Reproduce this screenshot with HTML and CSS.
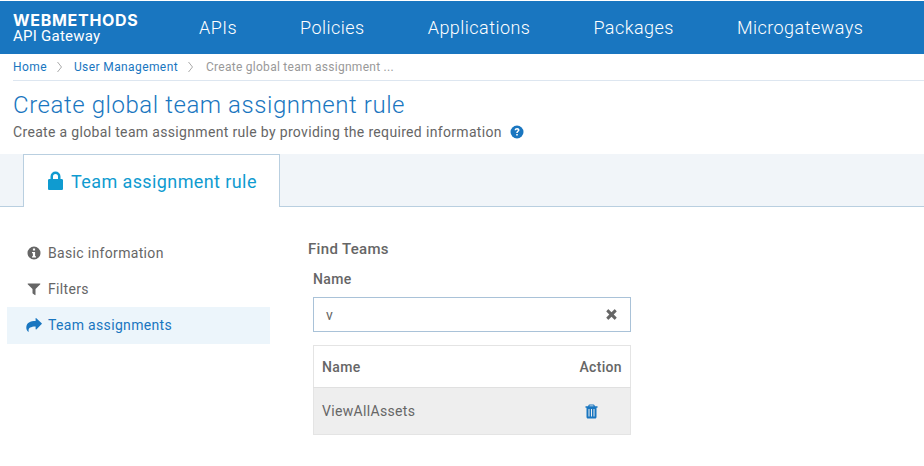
FILE: index.html
```html
<!DOCTYPE html>
<html lang="en">
  <head>
    <meta charset="UTF-8" />
    <meta name="viewport" content="width=device-width, initial-scale=1.0" />
    <title>Create global team assignment rule</title>
    <link rel="stylesheet" href="styles.css">
  </head>
  <body>
    <header class="topbar">
      <div class="brand">
        <div class="brand-name">WEBMETHODS</div>
        <div class="brand-sub">API Gateway</div>
      </div>
      <nav class="main-nav">
        <a>APIs</a>
        <a>Policies</a>
        <a>Applications</a>
        <a>Packages</a>
        <a>Microgateways</a>
      </nav>
    </header>
    <div class="crumbs">
      <a>Home</a>
      <svg class="sep" viewBox="0 0 5 10" width="5" height="10"><path d="M.5 0 4.500 5 .5 10" fill="none" stroke="#aaa" /></svg>
      <a>User Management</a>
      <svg class="sep" viewBox="0 0 5 10" width="5" height="10"><path d="M.5 0 4.500 5 .5 10" fill="none" stroke="#aaa" /></svg>
      <span class="crumb-current">Create global team assignment ...</span>
    </div>
    <section class="page-head">
      <h1>Create global team assignment rule</h1>
      <p>
        Create a global team assignment rule by providing the required information
        <svg class="help" viewBox="0 0 14 14" width="14" height="14">
          <circle cx="7" cy="7" r="6.5" fill="#1976c0" />
          <path d="M4.600 5.300c.1-1.400 1.100-2.200 2.500-2.200s2.400.8 2.400 2c0 1.700-1.800 1.600-1.800 3H6.200c0-2 1.600-2 1.600-2.900 0-.5-.3-.8-.8-.8s-.9.3-1 .9zM6.200 8.900h1.600v1.700H6.200z" fill="#fff" />
        </svg>
      </p>
    </section>
    <div class="tabs">
      <div class="tab">
        <svg viewBox="0 0 16 20" width="17" height="20">
          <path d="M3 8V5.500a5 5 0 0 1 10 0V8h1.200c.7 0 1.300.6 1.300 1.300v8.400c0 .7-.6 1.300-1.300 1.300H1.800C1.100 19 .5 18.400 .5 17.700V9.300C.5 8.600 1.100 8 1.800 8zM5.500 8h5V5.500a2.500 2.500 0 0 0-5 0z" fill="#0f9bd0" />
        </svg>
        Team assignment rule
      </div>
    </div>
    <main class="content">
      <ul class="side-nav">
        <li>
          <svg viewBox="0 0 14 14" width="14" height="14">
            <path fill-rule="evenodd" d="M7 .5a6.500 6.500 0 1 1 0 13 6.500 6.500 0 0 1 0-13zM5.900 2.500v2h2.200v-2zM5 6v1.300h.9v3H5v1.200h4v-1.200h-.9V6z" fill="#666" />
          </svg>
          Basic information
        </li>
        <li>
          <svg viewBox="0 0 14 14" width="14" height="14">
            <path d="M1 1.500h12c.4 0 .5.400.3.700L8.500 7v5.800c0 .4-.4.500-.7.300L5.700 11.500c-.1-.1-.2-.2-.2-.4V7L.7 2.200C.5 1.900.6 1.500 1 1.500z" fill="#666" />
          </svg>
          Filters
        </li>
        <li class="active">
          <svg viewBox="0 0 16 14" width="16" height="14">
            <path d="M15.700 5.300 10.300.2c-.3-.3-.7-.1-.7.3v2.600C4.500 3.200.3 4.700.3 9.700c0 1.700.8 3.100 1.900 4 .3.200.6 0 .5-.3C2 10.300 3.900 8.500 9.600 8.400v2.700c0 .4.400.6.700.3l5.400-5.300c.2-.2.200-.6 0-.8z" fill="#1976c0" />
          </svg>
          Team assignments
        </li>
      </ul>
      <div class="panel">
        <h2>Find Teams</h2>
        <div class="field">
          <label>Name</label>
          <div class="search-box">
            <span>v</span>
            <svg viewBox="0 0 12 12" width="11" height="11">
              <path d="M3 .6 6 3.600 9 .6c.3-.3.600-.3.900 0l1.500 1.500c.3.300.3.600 0 .9L8.400 6l3 3c.3.300.3.600 0 .9l-1.500 1.500c-.3.300-.6.300-.9 0L6 8.400l-3 3c-.3.300-.6.300-.9 0L.6 9.900c-.3-.3-.3-.6 0-.9l3-3-3-3c-.3-.3-.3-.6 0-.9L2.100.6c.3-.3.600-.3.900 0z" fill="#666" />
            </svg>
          </div>
          <table class="teams">
            <thead>
              <tr><th>Name</th><th class="action-col">Action</th></tr>
            </thead>
            <tbody>
              <tr>
                <td>ViewAllAssets</td>
                <td class="action-cell">
                  <svg viewBox="0 0 13 15" width="13" height="15">
                    <path fill-rule="evenodd" d="M4.500.5h4c.4 0 .7.200.9.600l.5 1.100h2.600v1.500h-1v9.300c0 .8-.6 1.500-1.300 1.500H2.800c-.7 0-1.300-.7-1.300-1.500V3.700h-1V2.200h2.600l.5-1.100c.2-.4.500-.6.900-.6zM4.700 1.500l-.3.700h4.200l-.3-.7zM3.500 5v7.500h1V5zM6 5v7.500h1V5zM8.500 5v7.500h1V5z" fill="#1976c0" />
                  </svg>
                </td>
              </tr>
            </tbody>
          </table>
        </div>
      </div>
    </main>
  </body>
</html>
```
FILE: styles.css
```css
* {
  box-sizing: border-box;
}
body {
  font-family: Roboto, "Liberation Sans", sans-serif;
  margin: 0;
  padding: 1px 0 0;
  background: #fff;
  color: #666;
  font-size: 14px;
  letter-spacing: 0.33px;
  overflow: hidden;
}
.topbar {
  display: flex;
  align-items: center;
  height: 53px;
  background: #1976c0;
  color: #fff;
  padding-left: 13px;
}
.brand {
  display: flex;
  flex-direction: column;
  gap: 1px;
  width: 186px;
}
.brand-name {
  font-family: Inter, sans-serif;
  font-size: 16px;
  font-weight: 700;
  line-height: 16px;
  letter-spacing: 0.7px;
}
.brand-sub {
  font-size: 15px;
  line-height: 15px;
  letter-spacing: 0.25px;
}
.main-nav {
  display: flex;
  gap: 63px;
  font-size: 18px;
  font-weight: 300;
  letter-spacing: 0.46px;
}
.crumbs {
  display: flex;
  align-items: center;
  height: 27px;
  margin-left: 13px;
  border-bottom: 1px solid #dde6f0;
  font-size: 12px;
  letter-spacing: 0.27px;
  color: #999;
}
.crumbs a {
  color: #1976c0;
  letter-spacing: 0.4px;
}
.sep {
  margin: 0 12px 0 10px;
}
.crumb-current {
  margin-left: 1px;
}
.page-head {
  padding: 10px 13px 0;
  height: 73px;
}
.page-head h1 {
  margin: 0 0 5px;
  font-size: 24px;
  font-weight: 300;
  line-height: 28px;
  color: #1976c0;
  letter-spacing: 0.56px;
}
.page-head p {
  margin: 0;
  line-height: 16px;
  display: flex;
  align-items: center;
  gap: 8px;
}
.tabs {
  height: 53px;
  padding-left: 23px;
  background: #f1f5f9;
  border-bottom: 1px solid #b9cfe0;
}
.tab {
  display: flex;
  align-items: center;
  gap: 7px;
  width: 257px;
  height: 53px;
  padding-left: 23px;
  background: #fff;
  border: 1px solid #b9cfe0;
  border-bottom: none;
  color: #0f9bd0;
  font-size: 18px;
  letter-spacing: 0.4px;
}
.content {
  display: flex;
  padding: 28px 0 0 7px;
}
.side-nav {
  width: 263px;
  margin: 0 38px 0 0;
  padding: 0;
  list-style: none;
}
.side-nav li {
  display: flex;
  align-items: center;
  gap: 7px;
  height: 36px;
  padding-left: 20px;
}
.side-nav svg {
  flex: none;
  width: 14px;
}
.side-nav .active {
  height: 37px;
  padding-bottom: 1px;
  background: #ecf5fb;
  color: #1976c0;
}
.side-nav .active svg {
  width: 16px;
  margin: 0 -1px 0 -1px;
}
.panel {
  padding-top: 6px;
}
.panel h2 {
  margin: 0 0 14px;
  font-size: 15px;
  font-weight: 500;
  line-height: 16px;
}
.field {
  margin-left: 5px;
  width: 318px;
}
.field label {
  display: block;
  font-weight: 500;
  line-height: 16px;
  margin-bottom: 10px;
}
.search-box {
  display: flex;
  align-items: center;
  justify-content: space-between;
  height: 35px;
  padding: 0 13px 0 12px;
  border: 1px solid #a9c2d8;
  margin-bottom: 13px;
}
.teams {
  width: 100%;
  border-collapse: collapse;
  border: 1px solid #e4e4e4;
}
.teams th {
  height: 42px;
  padding: 0 8px;
  text-align: left;
  font-weight: 500;
}
.teams td {
  height: 47px;
  padding: 0 8px;
  background: #eee;
  border-top: 1px solid #e0e0e0;
}
.teams .action-col {
  width: 78px;
  text-align: right;
}
.action-cell {
  text-align: center;
}
.action-cell svg {
  vertical-align: middle;
}
```
